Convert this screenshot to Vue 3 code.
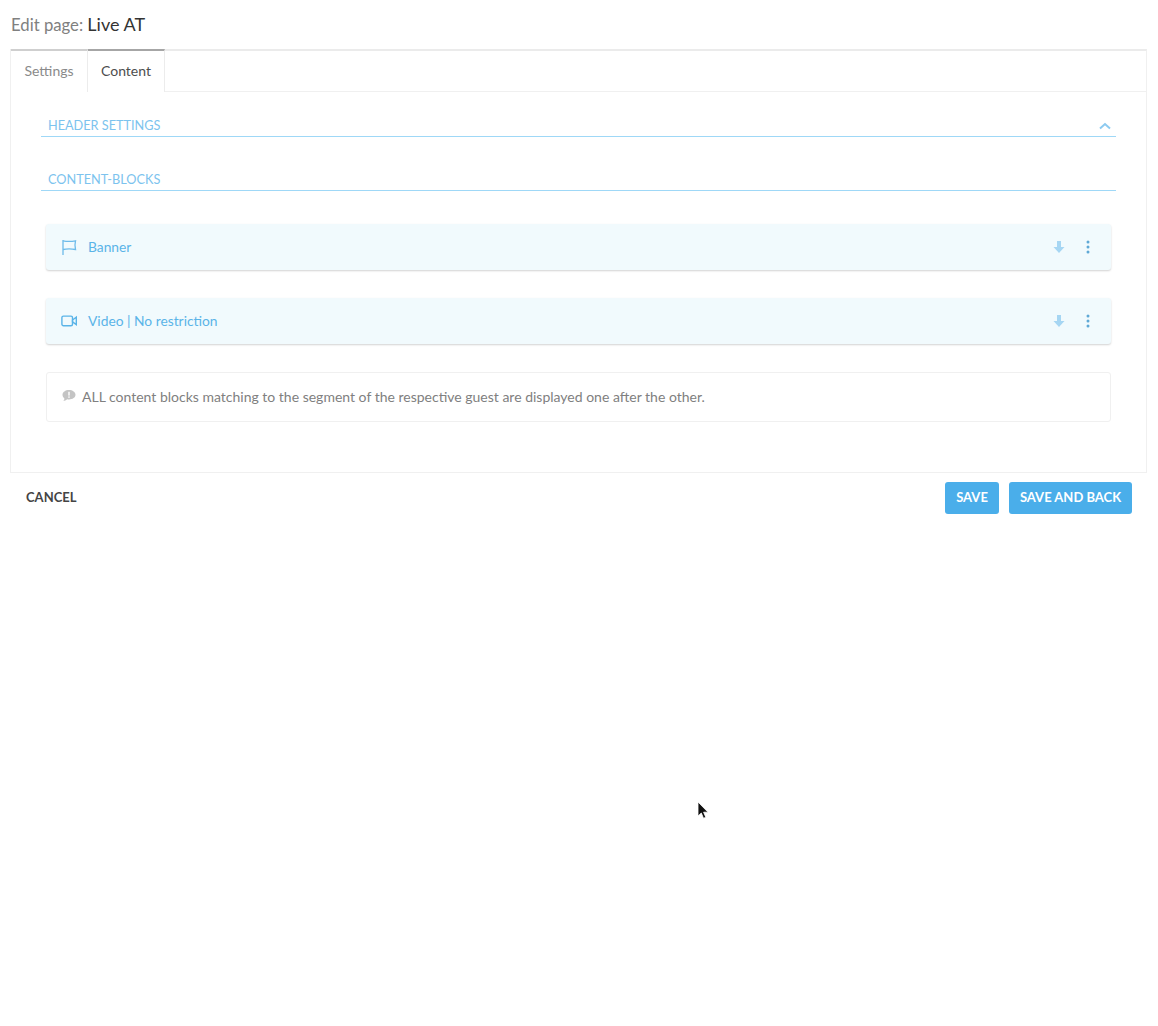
<script setup>
const blocks = [
  { name: 'Banner', icon: 'flag' },
  { name: 'Video | No restriction', icon: 'video' }
]
</script>

<template>
  <div class="page">
    <h1 class="title"><span class="title-label">Edit page:</span> <span class="title-name">Live AT</span></h1>

    <div class="panel">
      <div class="tabs">
        <div class="tab">Settings</div>
        <div class="tab active">Content</div>
      </div>

      <div class="panel-body">
        <div class="section first">
          <span>HEADER SETTINGS</span>
          <svg class="chevron" width="12" height="8" viewBox="0 0 12 8"><path d="M1 6.500 6 2l5 4.500" fill="none" stroke="#8ccaf0" stroke-width="2"/></svg>
        </div>
        <div class="section second"><span>CONTENT-BLOCKS</span></div>

        <div class="blocks">
          <div v-for="b in blocks" :key="b.name" class="block">
            <svg v-if="b.icon === 'flag'" class="block-icon" width="16" height="16" viewBox="0 0 16 16" fill="none" stroke="#6dbbea" stroke-width="1.300">
              <path d="M2 1v15"/>
              <path d="M2 1.800c4 .8 8 .8 12.500 0-.7 2.800-.7 6 0 8.700-4.500-.8-8.500-.8-12.500 0"/>
            </svg>
            <svg v-else class="block-icon" width="16" height="16" viewBox="0 0 16 16" fill="none" stroke="#5ab4e8" stroke-width="1.400">
              <rect x="0.900" y="3.100" width="10.600" height="9.600" rx="1.500"/>
              <path d="M11.500 7 15.300 4.200v7.400l-3.800-2.800z"/>
            </svg>
            <span class="block-name">{{ b.name }}</span>
            <svg class="arrow" width="12" height="14" viewBox="0 0 12 14"><path d="M4 1h4v6h3.500L6 13 .5 7H4z" fill="#a6d6f3"/></svg>
            <svg class="dots" width="4" height="14" viewBox="0 0 4 14" fill="#5fa9d6"><circle cx="2" cy="2" r="1.500"/><circle cx="2" cy="7" r="1.500"/><circle cx="2" cy="12" r="1.500"/></svg>
          </div>
        </div>

        <div class="info">
          <svg class="info-icon" width="14" height="12" viewBox="0 0 14 12"><path d="M7 0c3.600 0 6.500 2.100 6.500 4.800S10.600 9.500 7 9.500c-.7 0-1.300-.1-1.900-.2C4 10.500 2.500 11 1.200 11c.7-.7 1.200-1.600 1.200-2.600C1.100 7.500.5 6.200.5 4.800.5 2.100 3.400 0 7 0z" fill="#c4c4c4"/><rect x="6.300" y="1.800" width="1.400" height="3.800" fill="#fff"/><rect x="6.300" y="6.400" width="1.400" height="1.400" fill="#fff"/></svg>
          <span>ALL content blocks matching to the segment of the respective guest are displayed one after the other.</span>
        </div>
      </div>
    </div>

    <div class="footer">
      <span class="cancel">CANCEL</span>
      <div class="actions">
        <button class="btn save">SAVE</button>
        <button class="btn back">SAVE AND BACK</button>
      </div>
    </div>

    <svg class="cursor" width="13" height="19" viewBox="0 0 13 19"><path d="M1 1v14l3.300-3 2.200 5.300 2.300-1-2.200-5.100h4.400z" fill="#111" stroke="#fff" stroke-width="0.800"/></svg>
  </div>
</template>

<style scoped>
.page {
  position: relative;
  width: 1158px;
  height: 1026px;
  box-sizing: border-box;
  padding: 0 11px 0 10px;
  background: #fff;
  font-family: Lato, "Noto Sans", sans-serif;
  overflow: hidden;
}
.title {
  margin: 0;
  padding-left: 1px;
  height: 49px;
  line-height: 48px;
  font-size: 16.700px;
  font-weight: 400;
  white-space: nowrap;
}
.title-label { color: #808080; }
.title-name { color: #333; font-size: 18px; }
.panel {
  border: 1px solid #f0f0f0;
  border-top: 2px solid #ebebeb;
  height: 424px;
  box-sizing: border-box;
}
.tabs {
  display: flex;
  height: 42px;
  margin-top: -2px;
  border-bottom: 1px solid #f0f0f0;
  box-sizing: content-box;
}
.tab {
  width: 77px;
  box-sizing: border-box;
  height: 43px;
  border-top: 2px solid #cfcfcf;
  border-right: 1px solid #ececec;
  text-align: center;
  font-size: 14px;
  line-height: 39px;
  color: #8a8a8a;
  background: #fff;
}
.tab.active {
  border-top-color: #a6a6a6;
  color: #4d4d4d;
}
.panel-body {
  padding: 23px 30px 0 30px;
}
.section {
  display: flex;
  align-items: center;
  justify-content: space-between;
  box-sizing: content-box;
  height: 19px;
  padding: 0 5px 2px 7px;
  border-bottom: 1px solid #9fd8f7;
  color: #7cc3ee;
  font-size: 12.700px;
}
.section.second { margin-top: 32px; }
.chevron { display: block; margin-top: 2px; }
.blocks {
  margin: 33px 5px 0;
  display: flex;
  flex-direction: column;
  gap: 28px;
}
.block {
  display: flex;
  align-items: center;
  height: 46px;
  padding: 0 21px 0 15px;
  background: #f1fafd;
  border-radius: 3px;
  box-shadow: 0 1px 2px rgba(0, 0, 0, 0.18);
  color: #5ab4e8;
  font-size: 13.800px;
}
.block-icon { flex: none; }
.block-name { margin-left: 11px; flex: 1; padding-bottom: 2px; }
.arrow { margin-right: 21px; }
.info {
  margin: 28px 5px 0;
  height: 50px;
  box-sizing: border-box;
  display: flex;
  align-items: center;
  padding: 0 15px 1px;
  border: 1px solid #f0f0f0;
  border-radius: 3px;
  color: #808080;
  font-size: 14px;
}
.info-icon { margin-right: 6px; margin-top: -1px; flex: none; }
.footer {
  display: flex;
  justify-content: space-between;
  align-items: center;
  height: 32px;
  margin-top: 9px;
  padding: 0 15px 0 16px;
}
.cancel {
  font-size: 13px;
  font-weight: 700;
  color: #444;
  padding-bottom: 2px;
}
.actions { display: flex; gap: 10px; }
.btn {
  height: 32px;
  border: 0;
  border-radius: 3px;
  background: #4aaeea;
  color: #fff;
  font-family: inherit;
  font-size: 13px;
  font-weight: 700;
  padding: 0 0 2px;
}
.save { width: 54px; }
.back { width: 123px; }
.cursor {
  position: absolute;
  left: 697px;
  top: 801px;
}
</style>
